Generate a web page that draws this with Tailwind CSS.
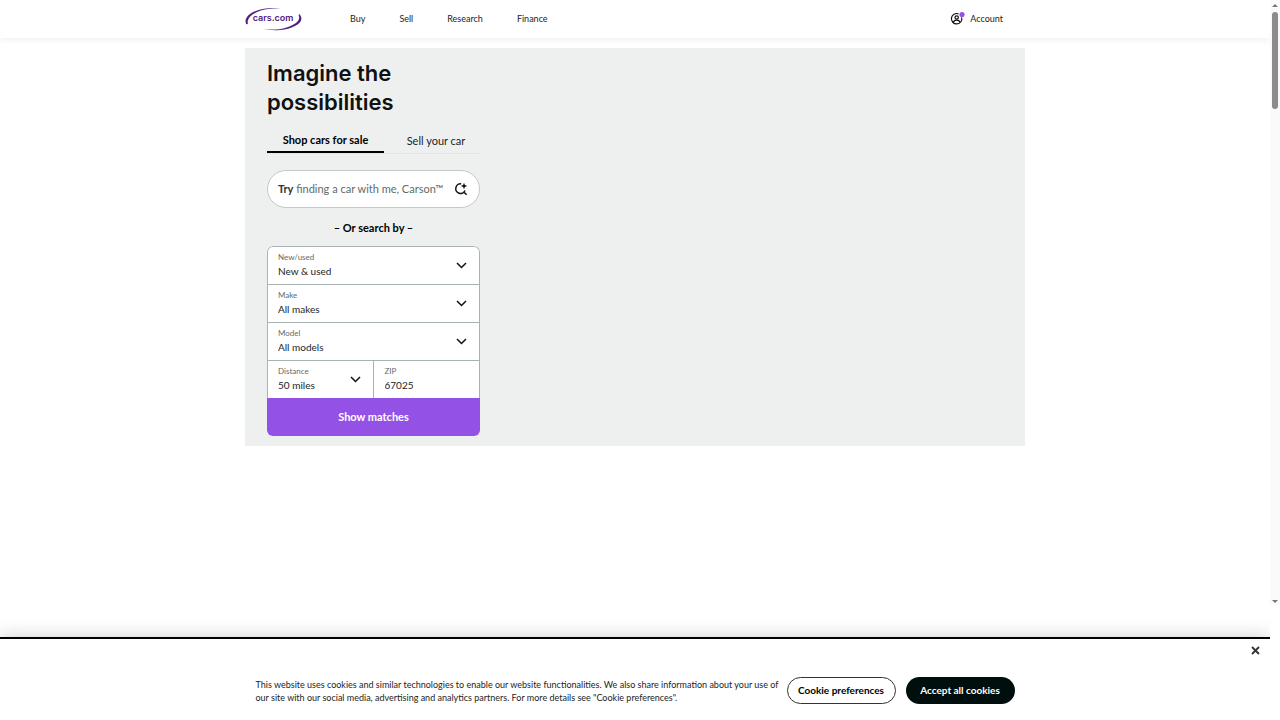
<!DOCTYPE html>
<html lang="en">
<head>
    <meta charset="UTF-8">
    <meta name="viewport" content="width=device-width, initial-scale=1.0">
    <title>New Cars, Used Cars, Car Dealers | Cars.com</title>
    <script src="https://cdn.jsdelivr.net/npm/@tailwindcss/browser@4"></script>
</head>
<body class="relative flex flex-col min-h-screen pr-[10px] bg-white text-[#1c2424] text-[10px] font-['Lato',sans-serif]">
    <header class="relative bg-white shadow-[0_1px_8px_rgba(0,0,0,0.08)]">
        <div class="flex items-center h-[38px] max-w-[780px] mx-auto text-[9px]">
            <a href="#" aria-label="cars.com home" class="shrink-0">
                <svg class="w-[58px] h-6" viewBox="0 0 58 24">
                    <path fill="#532380" d="M1.200 17.200C-2.400 9.400 9 2.300 23 1.200c5-.4 10-.2 14 .5-4.500-.3-8.500-.3-12.500.1C12.500 3 4 8.400 2.900 13.600c-.3 1.300-.3 2.400.1 3.400z" />
                    <path fill="#532380" d="M54.300 6.900c7.300 7.800-5.300 15-19 16.100-6 .4-11.500.1-16.500-.9 5 .5 10.500.6 15.500.1C45.800 20.800 57 14.400 53.600 8.300z" />
                    <text x="28" y="14" text-anchor="middle" font-family="Inter, sans-serif" font-size="9" font-weight="600" fill="#532380">cars.com</text>
                </svg>
            </a>
            <nav class="flex gap-[34px] ml-[47px]">
                <a href="#">Buy</a>
                <a href="#">Sell</a>
                <a href="#">Research</a>
                <a href="#">Finance</a>
            </nav>
            <a href="#" class="flex items-center gap-1 ml-auto mr-[22px]">
                <svg class="w-4 h-4" viewBox="0 0 16 16" fill="none" stroke="#111" stroke-width="1.200">
                    <path d="M8.500 2.900A5.200 5.200 0 1 0 11.600 6.300" />
                    <circle cx="6.700" cy="6.500" r="1.700" />
                    <path d="M3.300 11.600c.5-1.700 1.800-2.400 3.400-2.400s2.900.7 3.400 2.400" />
                    <circle cx="12" cy="3.500" r="2.600" fill="#9451e5" stroke="none" />
                </svg>
                Account
            </a>
        </div>
    </header>

    <main class="w-full max-w-[780px] mx-auto mt-[10px]">
        <section class="bg-[#eef0f0] px-[22px] pt-[11px] pb-[10px]">
            <div class="w-[213px]">
                <h1 class="text-[22px] leading-[29px] font-semibold text-[#111] font-['Inter',sans-serif]">Imagine the possibilities</h1>

                <div class="flex mt-3 border-b border-[#e2e6e6]" role="tablist">
                    <button type="button" role="tab" aria-selected="true" class="w-[117px] h-6 -mb-px border-b-2 border-black font-bold text-black text-[11px]">Shop cars for sale</button>
                    <button type="button" role="tab" aria-selected="false" class="flex-1 h-6 pl-2 text-[11px]">Sell your car</button>
                </div>

                <form id="search-form">
                    <div class="relative mt-4">
                        <label for="carson" class="absolute inset-y-0 left-[11px] flex items-center text-[11px] text-[#5f6b6b] whitespace-pre"><span class="font-bold text-[#2b3333]">Try</span> finding a car with me, Carson™</label>
                        <input type="text" id="carson" name="q" class="w-full h-[38px] px-3 rounded-full border border-[#c2c9c9] bg-white block">
                        <svg class="absolute right-3 top-3 w-[14px] h-[14px]" viewBox="0 0 14 14" fill="none" stroke="#111" stroke-width="1.500">
                            <path d="M7.200 1.900A4.800 4.800 0 1 0 11 8.500M9.800 10l2.800 2.800" />
                            <path fill="#111" stroke="none" d="M10 .8l.9 2.300 2.300.9-2.300.9L10 7.200l-.9-2.300L6.800 4l2.300-.9z" />
                        </svg>
                    </div>

                    <p class="mt-3 text-center text-[11px] leading-4 font-bold text-black">– Or search by –</p>

                    <div class="mt-[10px] rounded-md overflow-hidden">
                        <div class="rounded-t-md border border-b-0 border-[#aab3b3] bg-white">
                            <div class="relative h-[38px] pt-[5px] border-b border-[#aab3b3]">
                                <label for="stock" class="block px-[10px] text-[8px] leading-[10px] text-[#5f6b6b]">New/used</label>
                                <select id="stock" name="stock" class="block w-full h-[18px] px-[10px] text-[10px] appearance-none bg-transparent"><option>New &amp; used</option></select>
                                <svg class="absolute right-3 top-[15px] w-[11px] h-[7px] pointer-events-none" viewBox="0 0 11 7" fill="none" stroke="#111" stroke-width="1.500"><path d="M1 1l4.500 4.500L10 1" /></svg>
                            </div>
                            <div class="relative h-[38px] pt-[5px] border-b border-[#aab3b3]">
                                <label for="make" class="block px-[10px] text-[8px] leading-[10px] text-[#5f6b6b]">Make</label>
                                <select id="make" name="make" class="block w-full h-[18px] px-[10px] text-[10px] appearance-none bg-transparent"><option>All makes</option></select>
                                <svg class="absolute right-3 top-[15px] w-[11px] h-[7px] pointer-events-none" viewBox="0 0 11 7" fill="none" stroke="#111" stroke-width="1.500"><path d="M1 1l4.500 4.500L10 1" /></svg>
                            </div>
                            <div class="relative h-[38px] pt-[5px] border-b border-[#aab3b3]">
                                <label for="model" class="block px-[10px] text-[8px] leading-[10px] text-[#5f6b6b]">Model</label>
                                <select id="model" name="model" class="block w-full h-[18px] px-[10px] text-[10px] appearance-none bg-transparent"><option>All models</option></select>
                                <svg class="absolute right-3 top-[15px] w-[11px] h-[7px] pointer-events-none" viewBox="0 0 11 7" fill="none" stroke="#111" stroke-width="1.500"><path d="M1 1l4.500 4.500L10 1" /></svg>
                            </div>
                            <div class="grid grid-cols-2 h-[37px]">
                                <div class="relative pt-[5px] border-r border-[#aab3b3]">
                                    <label for="distance" class="block px-[10px] text-[8px] leading-[10px] text-[#5f6b6b]">Distance</label>
                                    <select id="distance" name="distance" class="block w-full h-[18px] px-[10px] text-[10px] appearance-none bg-transparent"><option>50 miles</option></select>
                                    <svg class="absolute right-3 top-[15px] w-[11px] h-[7px] pointer-events-none" viewBox="0 0 11 7" fill="none" stroke="#111" stroke-width="1.500"><path d="M1 1l4.500 4.500L10 1" /></svg>
                                </div>
                                <div class="pt-[5px]">
                                    <label for="zip" class="block px-[11px] text-[8px] leading-[10px] text-[#5f6b6b]">ZIP</label>
                                    <input type="text" id="zip" name="zip" value="67025" class="block w-full h-[18px] px-[11px] text-[10px]">
                                </div>
                            </div>
                        </div>
                        <button type="submit" class="block w-full h-[38px] bg-[#9451e5] text-white text-[11px] font-bold">Show matches</button>
                    </div>
                </form>
            </div>
        </section>
    </main>

    <div role="dialog" aria-label="Cookie consent" class="relative mt-auto h-[83px] border-t-2 border-black bg-white shadow-[0_0_18px_rgba(0,0,0,0.2)] [clip-path:inset(-20px_0_0_0)]">
        <button type="button" aria-label="Close" class="absolute right-[10px] top-[7px]">
            <svg class="w-[9px] h-[9px]" viewBox="0 0 9 9" fill="none" stroke="#333" stroke-width="1.800"><path d="M1 1l7 7M8 1L1 8" /></svg>
        </button>
        <div class="flex items-center max-w-[759px] mx-auto pt-[38px]">
            <p class="text-[9px] leading-[13px]">This website uses cookies and similar technologies to enable our website functionalities. We also share information about your use of<br>our site with our social media, advertising and analytics partners. For more details see "Cookie preferences".</p>
            <div class="flex gap-[10px] ml-auto">
                <button type="button" class="w-[109px] h-[27px] rounded-full border border-[#333] bg-white text-black font-bold whitespace-nowrap">Cookie preferences</button>
                <button type="button" class="w-[109px] h-[27px] rounded-full bg-[#000f0e] text-white font-bold whitespace-nowrap">Accept all cookies</button>
            </div>
        </div>
    </div>

    <!-- scrollbar -->
    <div aria-hidden="true" class="absolute right-0 top-0 w-[10px] h-[606px] bg-[#fafafa]">
        <svg class="absolute top-1 left-[2px] w-[6px] h-[3px]" viewBox="0 0 6 3"><path fill="#777" d="M0 3L3 0l3 3z" /></svg>
        <div class="absolute top-3 left-[2px] w-[6px] h-[97px] rounded-full bg-[#8b8b8b]"></div>
        <svg class="absolute bottom-[3px] left-[2px] w-[6px] h-[3px]" viewBox="0 0 6 3"><path fill="#777" d="M0 0l3 3 3-3z" /></svg>
    </div>
</body>
</html>
